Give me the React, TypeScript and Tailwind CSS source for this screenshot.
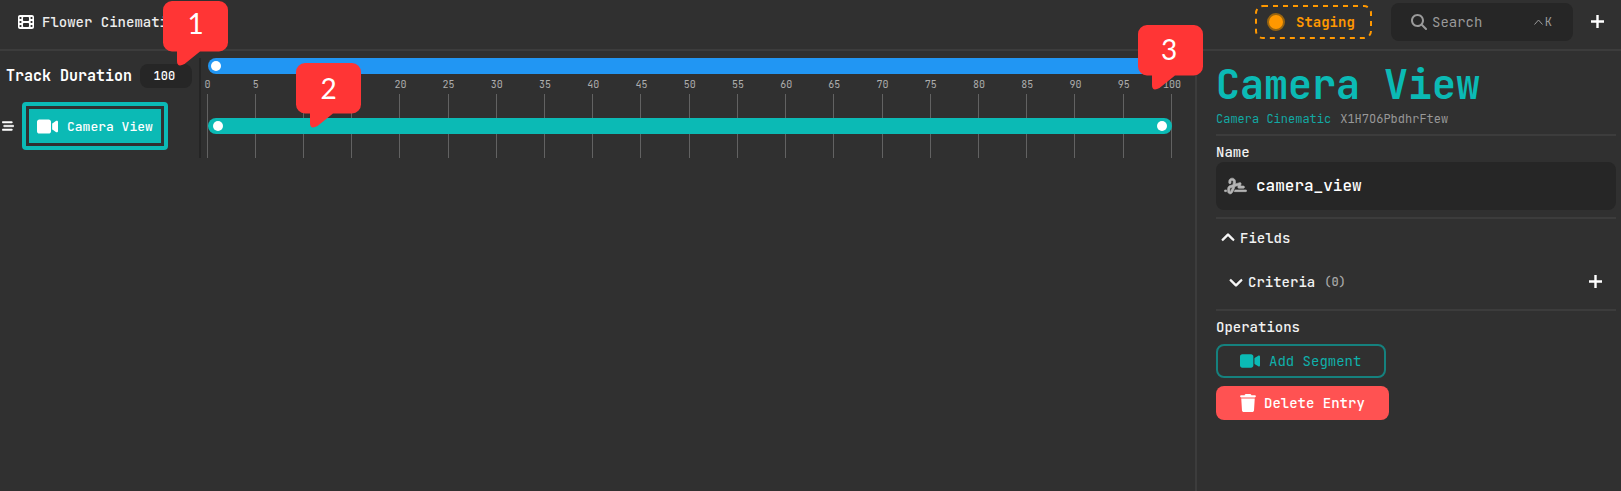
import React from "react";
import {
  FaBarsStaggered,
  FaChevronDown,
  FaChevronUp,
  FaFilm,
  FaMagnifyingGlass,
  FaSignature,
  FaTrash,
  FaVideo,
} from "react-icons/fa6";

const ticks = Array.from({ length: 21 }, (_, i) => i * 5);

function Callout({ label, className }: { label: string; className: string }) {
  return (
    <div className={`absolute z-10 h-[65px] w-[65px] ${className}`}>
      <svg className="absolute inset-0" width="65" height="65" viewBox="0 0 65 65">
        <path
          d="M9 0H56A9 9 0 0 1 65 9V41.500A9 9 0 0 1 56 50.500H37L21.500 63Q14 67 14 60V50.500H9A9 9 0 0 1 0 41.500V9A9 9 0 0 1 9 0Z"
          fill="#ff3535"
        />
      </svg>
      <div className="relative flex h-[50px] items-center justify-center font-['Lato',sans-serif] text-[28px] leading-none text-white">
        {label}
      </div>
    </div>
  );
}

function Plus() {
  return (
    <svg width="13" height="13" viewBox="0 0 13 13">
      <path d="M6.500 0v13M0 6.500h13" stroke="#fff" strokeWidth="2.400" />
    </svg>
  );
}

function Header() {
  return (
    <header className="flex h-[51px] shrink-0 items-start border-b-2 border-[#3c3c3c]">
      <div className="flex h-[44px] flex-1 items-center gap-2 pl-[18px] text-[14px] font-medium text-[#ececec]">
        <FaFilm className="size-4 text-white" />
        <span>Flower Cinematic</span>
      </div>
      <div className="mt-[5px] flex h-[34px] w-[117px] items-center">
        <svg className="absolute" width="117" height="34" viewBox="0 0 117 34">
          <rect x="1" y="1" width="115" height="32" rx="7" fill="none" stroke="#ff9800" strokeWidth="2" strokeDasharray="5 5" />
        </svg>
        <span className="ml-3 size-[18px] rounded-full border-2 border-[#98640f] bg-[#ff9800]" />
        <span className="ml-[11px] text-[14px] font-bold text-[#ff9800]">Staging</span>
      </div>
      <div className="ml-[19px] mt-[3px] flex h-[38px] w-[182px] items-center rounded-lg bg-[#262626] pl-5 pr-[21px] text-[14px] text-[#9a9a9a]">
        <FaMagnifyingGlass className="size-4" />
        <span className="ml-[5px] flex-1">Search</span>
        <svg width="9" height="6" viewBox="0 0 9 6" className="mr-[2px]">
          <path d="M.5 5.500 4.500 1l4 4.500" fill="none" stroke="currentColor" />
        </svg>
        <span className="text-[12px]">K</span>
      </div>
      <div className="flex h-[43px] w-12 items-center justify-center pl-px">
        <Plus />
      </div>
    </header>
  );
}

function Tracks() {
  return (
    <aside className="flex w-[199px] shrink-0 flex-col pt-[13px]">
      <div className="flex h-6 items-center pl-[6px]">
        <span className="w-[134px] whitespace-nowrap text-[15px] font-bold text-white">Track Duration</span>
        <span className="flex h-6 w-[52px] items-center rounded-lg bg-[#262626] pl-[13.500px] text-[12px] font-medium text-white">
          100
        </span>
      </div>
      <div className="mt-[14px] flex items-center">
        <FaBarsStaggered className="ml-[2px] size-3 text-white" stroke="#fff" strokeWidth="22" />
        <div className="ml-2 h-12 w-[146px] rounded border-4 border-[#0bbab5] p-[3px]">
          <div className="flex h-full items-center bg-[#0bbab5] pl-2 text-white">
            <FaVideo className="h-[19px] w-[21px]" />
            <span className="ml-[9px] whitespace-nowrap pt-px text-[13px] font-medium">Camera View</span>
          </div>
        </div>
      </div>
    </aside>
  );
}

function Timeline() {
  return (
    <section className="flex-1 pt-[7px]">
      <div className="h-[100px] border-l-2 border-[#252525] pl-[7px]">
        <div className="w-[964px]">
          <div className="flex h-4 items-center justify-between rounded-full bg-[#2196f3] px-[3px]">
            <span className="size-[10px] rounded-full bg-white" />
            <span className="size-[10px] rounded-full bg-white" />
          </div>
          <div className="grid">
            <div className="col-start-1 row-start-1 -ml-px mr-[0.500px] flex justify-between">
              {ticks.map((t) => (
                <div key={t} className="flex w-0 flex-col items-center">
                  <span className="flex h-5 items-center pl-px text-[10px] text-[#adadad]">{t}</span>
                  <span className="h-16 w-px bg-[#626262]" />
                </div>
              ))}
            </div>
            <div className="z-[1] col-start-1 row-start-1 mt-11 flex h-4 items-center justify-between rounded-full bg-[#0bbab5] px-[5px]">
              <span className="size-[10px] rounded-full bg-white" />
              <span className="size-[10px] rounded-full bg-white" />
            </div>
          </div>
        </div>
      </div>
    </section>
  );
}

function Inspector() {
  return (
    <aside className="flex w-[426px] shrink-0 flex-col border-l-2 border-[#3c3c3c] pl-[19px] pr-[5px] text-[14px] font-medium text-[#f2f2f2]">
      <h1 className="mt-[9px] h-[50px] text-[40px] font-bold leading-[50px] text-[#0bbab5]">Camera View</h1>
      <div className="flex h-6 gap-[9px] text-[12px] font-normal leading-[18px]">
        <span className="text-[#12a8a3]">Camera Cinematic</span>
        <span className="text-[#989898]">X1H7O6PbdhrFtew</span>
      </div>
      <hr className="border-t-2 border-[#3c3c3c]" />
      <div className="h-[26px] pt-[6px] leading-[20px]">Name</div>
      <div className="flex h-12 shrink-0 items-center rounded-lg bg-[#262626] pl-2 text-[16px] text-white">
        <FaSignature className="h-[18px] w-[23px] text-[#b4b4b4]" stroke="currentColor" strokeWidth="18" />
        <span className="ml-[9px]">camera_view</span>
      </div>
      <hr className="mt-[7px] border-t-2 border-[#3c3c3c]" />
      <div className="mt-[9px] flex h-[20px] items-center gap-[5px] pl-[5px]">
        <FaChevronUp className="size-[14px] text-white" stroke="#fff" strokeWidth="28" />
        <span>Fields</span>
      </div>
      <div className="mt-6 flex h-5 items-center pl-[13px] pr-[14px]">
        <FaChevronDown className="size-[14px] text-white" stroke="#fff" strokeWidth="28" />
        <span className="ml-[5px]">Criteria</span>
        <span className="ml-[9px] flex-1 pb-px text-[12px] text-[#a8a8a8]">(0)</span>
        <span className="pb-[2px]">
          <Plus />
        </span>
      </div>
      <hr className="mt-[17px] border-t-2 border-[#3c3c3c]" />
      <div className="mt-[6px] h-[27px] leading-[20px]">Operations</div>
      <button className="flex h-[34px] w-[170px] items-center rounded-lg border-2 border-[#15817e] pl-[22px] font-normal text-[#0fb0ab]">
        <FaVideo className="h-[18px] w-[20px] text-[#0bbab5]" />
        <span className="ml-[9px]">Add Segment</span>
      </button>
      <button className="mt-2 flex h-[34px] w-[173px] items-center rounded-lg bg-[#ff5252] pl-6 text-white">
        <FaTrash className="h-[18px] w-4" />
        <span className="ml-2">Delete Entry</span>
      </button>
    </aside>
  );
}

export default function App() {
  return (
    <div className="relative flex h-[491px] w-[1621px] flex-col overflow-hidden bg-[#303030] font-['JetBrains_Mono','DejaVu_Sans_Mono',monospace]">
      <Header />
      <main className="flex flex-1">
        <Tracks />
        <Timeline />
        <Inspector />
      </main>
      <Callout label="1" className="left-[162.500px] top-[0.500px] [&>div]:h-[44px] [&>div]:pl-px" />
      <Callout label="2" className="left-[296px] top-[63px]" />
      <Callout label="3" className="left-[1138px] top-[25px] [&>div]:h-[47px] [&>div]:pr-[3px]" />
    </div>
  );
}
